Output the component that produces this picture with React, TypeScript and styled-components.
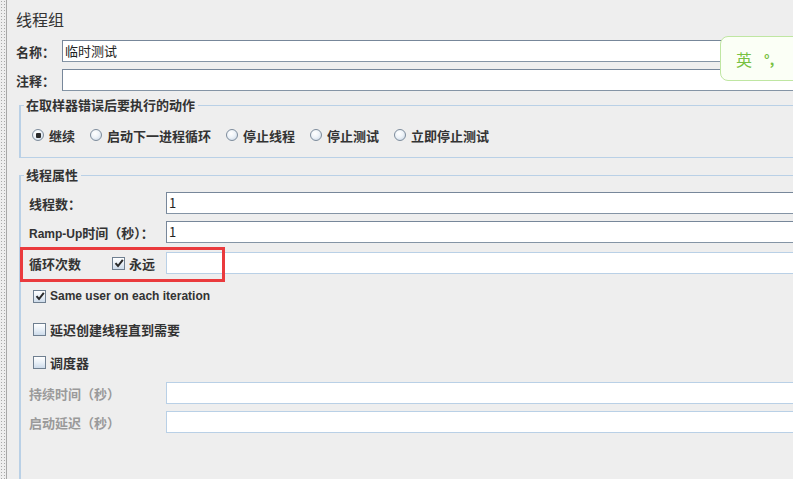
import React from 'react';
import styled, { createGlobalStyle } from 'styled-components';

const Global = createGlobalStyle`
  html, body { margin: 0; padding: 0; background: #eeeeee; overflow: hidden; }
  body { font-family: "Noto Sans CJK SC", "Liberation Sans", sans-serif; color: #333; }
  * { box-sizing: border-box; }
`;

const Page = styled.div`
  position: relative;
  width: 793px;
  height: 479px;
  overflow: hidden;
  display: flex;
  background: #eeeeee;
`;

const Strip = styled.div`
  width: 7px;
  flex: none;
  background-color: #eeeeee;
  background-image: radial-gradient(circle, #a9a9a9 0.7px, transparent 0.9px);
  background-size: 3px 3px;
  border-right: 1px solid #a8a8a8;
`;

const Main = styled.div`
  flex: none;
  width: 880px;
  padding-left: 9px;
  display: flex;
  flex-direction: column;
`;

const Title = styled.div`
  margin-top: 8px;
  height: 22px;
  line-height: 22px;
  font-size: 16px;
  color: #333;
`;

const FieldRow = styled.div<{ $mt: number }>`
  display: flex;
  align-items: center;
  height: 22px;
  margin-top: ${p => p.$mt}px;
`;

const FieldLabel = styled.span<{ $w: number; $disabled?: boolean }>`
  flex: none;
  width: ${p => p.$w}px;
  font-size: 13px;
  font-weight: 700;
  white-space: nowrap;
  color: ${p => (p.$disabled ? '#9a9a9a' : '#333')};
`;

const TextBox = styled.div<{ $light?: boolean }>`
  flex: 1;
  height: 22px;
  background: #ffffff;
  border: 1px solid ${p => (p.$light ? '#b9d0e6' : '#8494a5')};
  ${p => (p.$light ? '' : 'border-top-color: #77879a; border-left-color: #77879a;')}
  font-size: 13px;
  line-height: 20px;
  padding-left: 2px;
  color: #222;
  white-space: nowrap;
`;

const Group = styled.fieldset<{ $mt: number; $grow?: boolean }>`
  margin: ${p => p.$mt}px 0 0 3px;
  padding: 0;
  border: 1px solid #b9d0e6;
  border-left-width: 2px;
  min-width: 0;
  ${p => (p.$grow ? 'flex: 1; margin-bottom: -20px;' : '')}
`;

const Legend = styled.legend`
  margin-left: 3px;
  padding: 0 3px 0 2px;
  font-size: 13px;
  font-weight: 700;
  line-height: 16px;
  color: #333;
`;

const RadioRow = styled.div`
  display: flex;
  align-items: center;
  height: 16px;
  margin: 14px 0 14px 11px;
`;

const RadioItem = styled.label`
  display: flex;
  align-items: center;
  gap: 5px;
  margin-right: 15px;
  font-size: 13px;
  font-weight: 700;
  color: #333;
  white-space: nowrap;
`;

const RadioDot = styled.span<{ $on?: boolean }>`
  position: relative;
  flex: none;
  width: 12px;
  height: 12px;
  border-radius: 50%;
  border: 1px solid #7d8c9c;
  background: radial-gradient(circle at 40% 35%, #ffffff 0%, #eef3f8 45%, #c3d2e2 100%);
  &::after {
    content: '';
    display: ${p => (p.$on ? 'block' : 'none')};
    position: absolute;
    left: 2.5px;
    top: 2.5px;
    width: 5px;
    height: 5px;
    border-radius: 1px;
    background: #2b2b2b;
  }
`;

const GroupBody = styled.div`
  display: flex;
  flex-direction: column;
  padding: 9px 0 0 8px;
`;

const LoopRow = styled.div`
  position: relative;
  display: flex;
  align-items: center;
  height: 22px;
  margin-top: 9px;
`;

const RedFrame = styled.div`
  position: absolute;
  left: -9px;
  top: -5px;
  width: 205px;
  height: 35px;
  border: 3px solid #ea3a3d;
  pointer-events: none;
`;

const CheckRow = styled.div<{ $mt: number; $inset: number }>`
  display: flex;
  align-items: center;
  gap: 4px;
  height: 22px;
  margin-top: ${p => p.$mt}px;
  padding-left: ${p => p.$inset}px;
  font-size: 13px;
  font-weight: 700;
  color: #333;
  white-space: nowrap;
`;

const Latin = styled.span`
  font-family: "Liberation Sans", Arial, sans-serif;
  font-size: 12px;
  font-weight: 700;
`;

const Box = styled.span`
  flex: none;
  width: 13px;
  height: 13px;
  border: 1px solid #6f7f90;
  background: linear-gradient(180deg, #ffffff 0%, #e9f0f7 50%, #cddbea 100%);
  display: flex;
  align-items: center;
  justify-content: center;
`;

const Spacer = styled.span<{ $w: number }>`
  flex: none;
  width: ${p => p.$w}px;
`;

const ImeBar = styled.div`
  position: absolute;
  left: 720px;
  top: 36px;
  width: 110px;
  height: 45px;
  border: 1px solid #bfe6a2;
  border-radius: 8px;
  background: #fbfff6;
  display: flex;
  align-items: center;
  gap: 12px;
  padding-left: 15px;
  color: #78c142;
  font-size: 16px;
  white-space: nowrap;
`;

const ImeMark = styled.span`
  font-size: 14px;
  font-weight: 700;
`;

const Check = () => (
  <svg width="10" height="10" viewBox="0 0 10 10">
    <path d="M1.5 5.2 L4 8 L8.8 1.8" fill="none" stroke="#2a2a2a" strokeWidth="2" />
  </svg>
);

const CheckBox = ({ on }: { on?: boolean }) => <Box>{on ? <Check /> : null}</Box>;

export default function App() {
  return (
    <Page>
      <Global />
      <Strip />
      <Main>
        <Title>线程组</Title>
        <FieldRow $mt={10}>
          <FieldLabel $w={46}>名称：</FieldLabel>
          <TextBox>临时测试</TextBox>
        </FieldRow>
        <FieldRow $mt={7}>
          <FieldLabel $w={46}>注释：</FieldLabel>
          <TextBox />
        </FieldRow>

        <Group $mt={6}>
          <Legend>在取样器错误后要执行的动作</Legend>
          <RadioRow>
            <RadioItem><RadioDot $on />继续</RadioItem>
            <RadioItem><RadioDot />启动下一进程循环</RadioItem>
            <RadioItem><RadioDot />停止线程</RadioItem>
            <RadioItem><RadioDot />停止测试</RadioItem>
            <RadioItem><RadioDot />立即停止测试</RadioItem>
          </RadioRow>
        </Group>

        <Group $mt={9} $grow>
          <Legend>线程属性</Legend>
          <GroupBody>
            <FieldRow $mt={0}>
              <FieldLabel $w={137}>线程数：</FieldLabel>
              <TextBox>1</TextBox>
            </FieldRow>
            <FieldRow $mt={7}>
              <FieldLabel $w={137}><Latin>Ramp-Up</Latin>时间（秒）：</FieldLabel>
              <TextBox>1</TextBox>
            </FieldRow>
            <LoopRow>
              <FieldLabel $w={83}>循环次数</FieldLabel>
              <CheckRow $mt={0} $inset={0}>
                <CheckBox on />永远
              </CheckRow>
              <Spacer $w={11} />
              <TextBox $light />
              <RedFrame />
            </LoopRow>
            <CheckRow $mt={11} $inset={4}>
              <CheckBox on />
              <Latin>Same user on each iteration</Latin>
            </CheckRow>
            <CheckRow $mt={11} $inset={4}>
              <CheckBox />延迟创建线程直到需要
            </CheckRow>
            <CheckRow $mt={11} $inset={4}>
              <CheckBox />调度器
            </CheckRow>
            <FieldRow $mt={9}>
              <FieldLabel $w={137} $disabled>持续时间（秒）</FieldLabel>
              <TextBox $light />
            </FieldRow>
            <FieldRow $mt={7}>
              <FieldLabel $w={137} $disabled>启动延迟（秒）</FieldLabel>
              <TextBox $light />
            </FieldRow>
          </GroupBody>
        </Group>
      </Main>
      <ImeBar>
        <span>英</span>
        <ImeMark>°,</ImeMark>
        <ImeMark>‘</ImeMark>
      </ImeBar>
    </Page>
  );
}
